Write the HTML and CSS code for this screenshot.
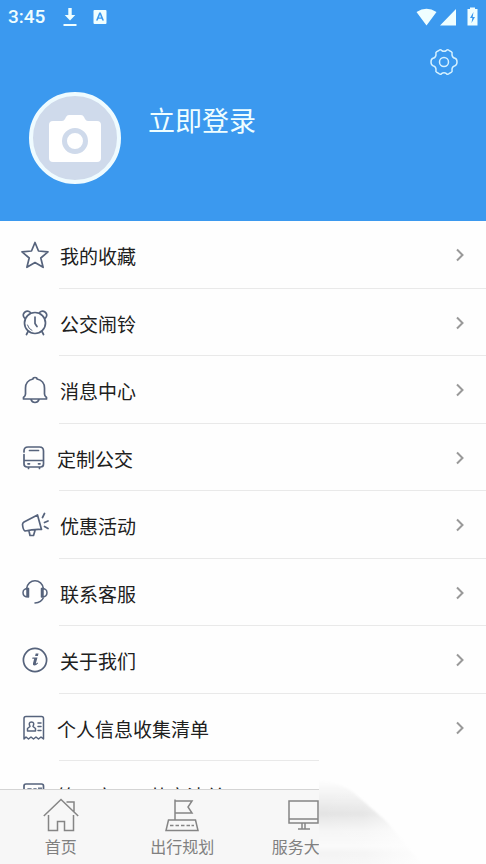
FILE: index.html
```html
<!DOCTYPE html>
<html lang="zh-CN">
<head>
<meta charset="utf-8">
<meta name="viewport" content="width=device-width, initial-scale=1">
<title>我的</title>
<link rel="stylesheet" href="styles.css">
</head>
<body>
<div class="app">
  <header class="hero">
    <div class="status">
      <span class="clock">3:45</span>
      <svg class="download" width="14" height="20" viewBox="0 0 14 20" aria-hidden="true"><path d="M5.3 1h3.4v7h3.6L7 13.500 1.700 8h3.600zM.5 17h13v2H.5z"/></svg>
      <svg class="input-method" width="14" height="16" viewBox="0 0 14 16" aria-hidden="true"><path fill-rule="evenodd" d="M1.500 1h11q1 0 1 1v12q0 1-1 1h-11q-1 0-1-1V2q0-1 1-1zM6.200 3.500 3 11.500h1.800l.6-1.700h3.200l.6 1.700H11L7.800 3.500zM7 5.500l1 3H6z"/></svg>
      <svg class="signals" width="62" height="20" viewBox="0 0 62 20" aria-hidden="true">
        <path d="M.5 5Q10.500-1.500 20.500 5L10.500 18.500zM40 2v16.500H24zM51.500 2H54V.5h5V2h2.500v16.500h-10z"/>
        <path class="bolt" d="M57.500 5l-3.500 6h2.300l-.8 5 3.500-6h-2.300z"/>
      </svg>
    </div>
    <button class="settings" type="button" aria-label="设置">
      <svg width="28" height="28" viewBox="0 0 28 28" aria-hidden="true"><path d="M9 2.300Q10.500 1 11.500 2.300 14 4.300 16.500 2.300 17.500 1 19 2.300L21.500 3.800Q22.500 4.500 22 6 21.800 9.500 25 10.300 27 11 27 14T25 17.700Q21.800 18.500 22 22 22.500 23.500 21.500 24.200L19 25.700Q17.500 27 16.500 25.700 14 23.700 11.500 25.700 10.500 27 9 25.700L6.500 24.200Q5.500 23.500 6 22 6.200 18.500 3 17.700 1 17 1 14T3 10.300Q6.200 9.500 6 6 5.500 4.500 6.500 3.800z"/><circle cx="14" cy="14" r="4.500"/></svg>
    </button>
    <div class="profile">
      <button class="avatar" type="button" aria-label="更换头像">
        <svg width="52" height="47" viewBox="0 0 52 47" aria-hidden="true"><path d="M4 6h9q2 0 3-2l1-2q1-2 3-2h12q2 0 3 2l1 2q1 2 3 2h9q4 0 4 4v33q0 4-4 4H4q-4 0-4-4V10q0-4 4-4z"/><circle cx="26" cy="26" r="10.500"/></svg>
      </button>
      <a class="login" href="#login">立即登录</a>
    </div>
  </header>

  <main class="list">
    <a class="row" href="#favorites">
      <svg class="icon" width="28" height="28" viewBox="0 0 28 28" aria-hidden="true"><path d="M14 1.500l3.500 8.500 9.500.8-7.200 6.200 2.300 9.300L14 21.500l-8.100 4.800L8.200 17 1 10.800l9.500-.8z"/></svg>
      <span class="label">我的收藏</span><svg class="chevron" width="10" height="14" viewBox="0 0 10 14" aria-hidden="true"><path d="M2 1.500 7.500 7 2 12.500"/></svg>
    </a>
    <a class="row" href="#alarm">
      <svg class="icon" width="28" height="28" viewBox="0 0 28 28" aria-hidden="true"><circle cx="14" cy="14" r="10.500"/><path d="M3.500 9C-.5 4.500 6 0 9.500 3.500M18.500 3.500C22 0 28.500 4.500 24.500 9M7 22.500l-1.500 3M21 22.500l1.500 3M14 8v6.500l2 3"/><path class="fine" d="M6.500 16q1 4 4.500 5.500"/></svg>
      <span class="label">公交闹铃</span><svg class="chevron" width="10" height="14" viewBox="0 0 10 14" aria-hidden="true"><path d="M2 1.500 7.500 7 2 12.500"/></svg>
    </a>
    <a class="row" href="#messages">
      <svg class="icon" width="28" height="28" viewBox="0 0 28 28" aria-hidden="true"><path d="M12 3q0-1.500 2-1.500T16 3c5 1 7.500 5 7.500 9v6q0 2 2 3.500V23h-23v-1.500q2-1.500 2-3.500v-6c0-4 2.500-8 7.500-9M10 23.500q1 3 4 3t4-3"/></svg>
      <span class="label">消息中心</span><svg class="chevron" width="10" height="14" viewBox="0 0 10 14" aria-hidden="true"><path d="M2 1.500 7.500 7 2 12.500"/></svg>
    </a>
    <a class="row compact" href="#custom-bus">
      <svg class="icon" width="28" height="28" viewBox="0 0 28 28" aria-hidden="true"><path d="M3 8V7q0-4 4-4h11.500q4 0 4 4v13q0 3-3 3H6q-3 0-3-3v-9.500M3 16.500h19.500M8.500 6.500h9M7 19.800h1.500M17.500 19.800H19M7.500 23v1.500M18.500 23v1.500"/></svg>
      <span class="label">定制公交</span><svg class="chevron" width="10" height="14" viewBox="0 0 10 14" aria-hidden="true"><path d="M2 1.500 7.500 7 2 12.500"/></svg>
    </a>
    <a class="row" href="#offers">
      <svg class="icon" width="28" height="28" viewBox="0 0 28 28" aria-hidden="true"><path d="M16.500 4l4 14.500q-8-.5-16.500 1.500Q2 19 1.500 13.500 1.500 12 3 11zM8 20l1 4.500h3.500l1.500-5M21.500 6.500l2-4M23.500 11.500l3.500-1.500M23.500 15.500l3.500 2"/></svg>
      <span class="label">优惠活动</span><svg class="chevron" width="10" height="14" viewBox="0 0 10 14" aria-hidden="true"><path d="M2 1.500 7.500 7 2 12.500"/></svg>
    </a>
    <a class="row" href="#support">
      <svg class="icon thin" width="28" height="28" viewBox="0 0 28 28" aria-hidden="true"><path d="M5.500 10C6.500-1 21.500-1 22.500 10M7.500 9.500v8.500q-5.500 0-5.500-4.300t5.500-4.200M20.500 9.500v8.500q5.500 0 5.500-4.300t-5.500-4.200M6 10.500v7M22 10.500v7M22.500 18.500q-2 5-8.500 5.500"/></svg>
      <span class="label">联系客服</span><svg class="chevron" width="10" height="14" viewBox="0 0 10 14" aria-hidden="true"><path d="M2 1.500 7.500 7 2 12.500"/></svg>
    </a>
    <a class="row" href="#about">
      <svg class="icon" width="28" height="28" viewBox="0 0 28 28" aria-hidden="true"><circle cx="14" cy="14" r="11.600"/><path class="solid" d="M14.700 7.500h2.800l-.6 2.500h-2.800zM11.500 11.500h5l-1.700 6q.9 0 2-1l.3.800q-2 2.200-3.700 2.200-2 0-1.400-2.200l1.200-4.500h-2z"/></svg>
      <span class="label">关于我们</span><svg class="chevron" width="10" height="14" viewBox="0 0 10 14" aria-hidden="true"><path d="M2 1.500 7.500 7 2 12.500"/></svg>
    </a>
    <a class="row compact" href="#personal-info">
      <svg class="icon thin" width="28" height="28" viewBox="0 0 28 28" aria-hidden="true"><path d="M3 25V4.500q0-2 2-2h15.500q2 0 2 2V25L20 23l-2.500 2-2.500-2-2.500 2-2.500-2-2.500 2L5 23zM17 9h3M17 12.500h3M17 16.500h3M9 12.500Q7 8 10.500 8T12 12.500l2.500 2v2.500h-8v-2.500z"/></svg>
      <span class="label">个人信息收集清单</span><svg class="chevron" width="10" height="14" viewBox="0 0 10 14" aria-hidden="true"><path d="M2 1.500 7.500 7 2 12.500"/></svg>
    </a>
    <a class="row compact" href="#third-party">
      <svg class="icon" width="28" height="28" viewBox="0 0 28 28" aria-hidden="true"><path d="M3 25V5q0-2 2-2h15.500q2 0 2 2v20zM7 8h3v3H7zM13 11V8h2v3M18 7v4h2V7"/></svg>
      <span class="label">第三方App共享清单</span>
    </a>
  </main>

  <nav class="tabs">
    <a class="tab" href="#home">
      <svg width="36" height="34" viewBox="0 0 36 34" aria-hidden="true"><path d="M.8 18 18 1.500 35.200 18M23.500 4H31v10M5.500 17v15.500h9v-9h7v9h9V17"/></svg>
      <span class="tab-label">首页</span>
    </a>
    <a class="tab" href="#plan">
      <svg width="36" height="34" viewBox="0 0 36 34" aria-hidden="true"><path d="M11 22V1.500M11 3h17l-4 6 4 6H11M4.500 22h27l2.500 10.500H2zM6 27.500h24"/><path class="gaps" d="M9.500 27.500h2M15 27.500h2M20.500 27.500h2M26 27.500h1.500"/></svg>
      <span class="tab-label">出行规划</span>
    </a>
    <a class="tab" href="#services">
      <svg width="36" height="34" viewBox="0 0 36 34" aria-hidden="true"><path d="M3 3h29v22H3zM3 21h29M16 25v5.500M19 25v5.500M12 31h12"/></svg>
      <span class="tab-label">服务大</span>
    </a>
    <svg class="fade" width="167" height="104" viewBox="0 0 167 104" aria-hidden="true">
      <defs>
        <linearGradient id="shade" x1="0" y1="0" x2="0" y2="1">
          <stop offset="0" stop-color="#fefefe"/><stop offset=".2" stop-color="#f1f1f1"/><stop offset=".38" stop-color="#e3e3e3"/><stop offset=".58" stop-color="#f6f6f6"/><stop offset=".75" stop-color="#fafafa"/><stop offset=".84" stop-color="#f3f3f3"/><stop offset="1" stop-color="#f9f9f9"/>
        </linearGradient>
        <linearGradient id="veil"><stop offset="0" stop-color="#fefefe" stop-opacity="0"/><stop offset=".4" stop-color="#fefefe" stop-opacity=".1"/><stop offset="1" stop-color="#fefefe"/></linearGradient>
        <filter id="soft" x="-10%" y="-10%" width="120%" height="120%"><feGaussianBlur stdDeviation="1"/></filter>
      </defs>
      <path fill="#fefefe" d="M0 0h167v104H0z"/>
      <path fill="url(#shade)" filter="url(#soft)" d="M-4 20Q22 22 36 34L68 62 106 108H-4z"/>
      <path fill="url(#veil)" d="M0 18h110v86H0z"/>
    </svg>
  </nav>
</div>
</body>
</html>
```
FILE: styles.css
```css
* { box-sizing: border-box; }

body {
  margin: 0;
  background: #fefefe;
  color: #202020;
  font-family: "Noto Sans CJK SC", sans-serif;
}

a { color: inherit; text-decoration: none; }
button { padding: 0; border: 0; background: none; cursor: pointer; }
svg { display: block; flex: none; }

.app {
  display: flex;
  flex-direction: column;
  height: 100vh;
  overflow: hidden;
}

.hero {
  display: flex;
  flex-direction: column;
  flex: none;
  padding-bottom: 37px;
  background: #3b99ef;
  color: #effeff;
}

.status {
  display: flex;
  align-items: center;
  height: 34px;
  padding: 0 8px;
  fill: #effeff;
}

.clock {
  font: 500 19px/24px Roboto, sans-serif;
}

.download { margin-left: 18px; }
.input-method { margin-left: 16px; }
.signals { margin-left: auto; }
.bolt { fill: #3b99ef; }

.settings {
  align-self: flex-end;
  margin: 14px 28px 0 0;
}

.settings svg {
  fill: none;
  stroke: #d5f1ff;
  stroke-width: 1.5;
}

.profile {
  display: flex;
  align-items: flex-start;
  gap: 27px;
  margin-top: 16px;
  padding-left: 29px;
}

.avatar {
  display: grid;
  place-items: center;
  width: 92px;
  height: 92px;
  border: 4px solid #effbff;
  border-radius: 50%;
  background: #cfdaeb;
}

.avatar svg { fill: #fff; }
.avatar circle { stroke: #cfdaeb; stroke-width: 5; }

.login {
  margin-top: 8px;
  font-size: 27px;
  line-height: 40px;
}

.list {
  flex: 1;
  min-height: 0;
  overflow: hidden;
}

.row {
  display: grid;
  grid-template-columns: 28px 1fr auto;
  align-items: center;
  column-gap: 11px;
  height: 68px;
  padding: 0 21px;
  background: linear-gradient(#e9e9e9, #e9e9e9) 59px 100% / 100% 1px no-repeat;
}

.row:nth-child(even) { height: 67px; }
.row.compact { column-gap: 8px; }

.label {
  padding-top: 2px;
  font-size: 19px;
  line-height: 28px;
}

.icon {
  fill: none;
  stroke: #56637c;
  stroke-width: 1.7;
  stroke-linejoin: round;
  stroke-linecap: round;
}

.icon.thin { stroke-width: 1.5; }
.icon .fine { stroke-width: 1; }
.icon .solid { fill: #56637c; stroke: none; }

.chevron {
  fill: none;
  stroke: #999;
  stroke-width: 2;
}

.tabs {
  position: relative;
  display: grid;
  grid-template-columns: repeat(4, 1fr);
  flex: none;
  height: 75px;
  border-top: 1px solid #d4d4d4;
  background: #f7f7f7;
  color: #808080;
}

.tab {
  display: flex;
  flex-direction: column;
  align-items: center;
  padding-top: 8px;
}

.tab svg {
  fill: none;
  stroke: #858585;
  stroke-width: 1.5;
}

.tab .gaps { stroke: #f7f7f7; stroke-width: 3; }

.tab-label {
  margin-top: 2px;
  font-size: 16px;
  line-height: 24px;
}

.tab:nth-child(3) .tab-label { width: 4em; }

.fade {
  position: absolute;
  right: 0;
  bottom: 0;
}
```
